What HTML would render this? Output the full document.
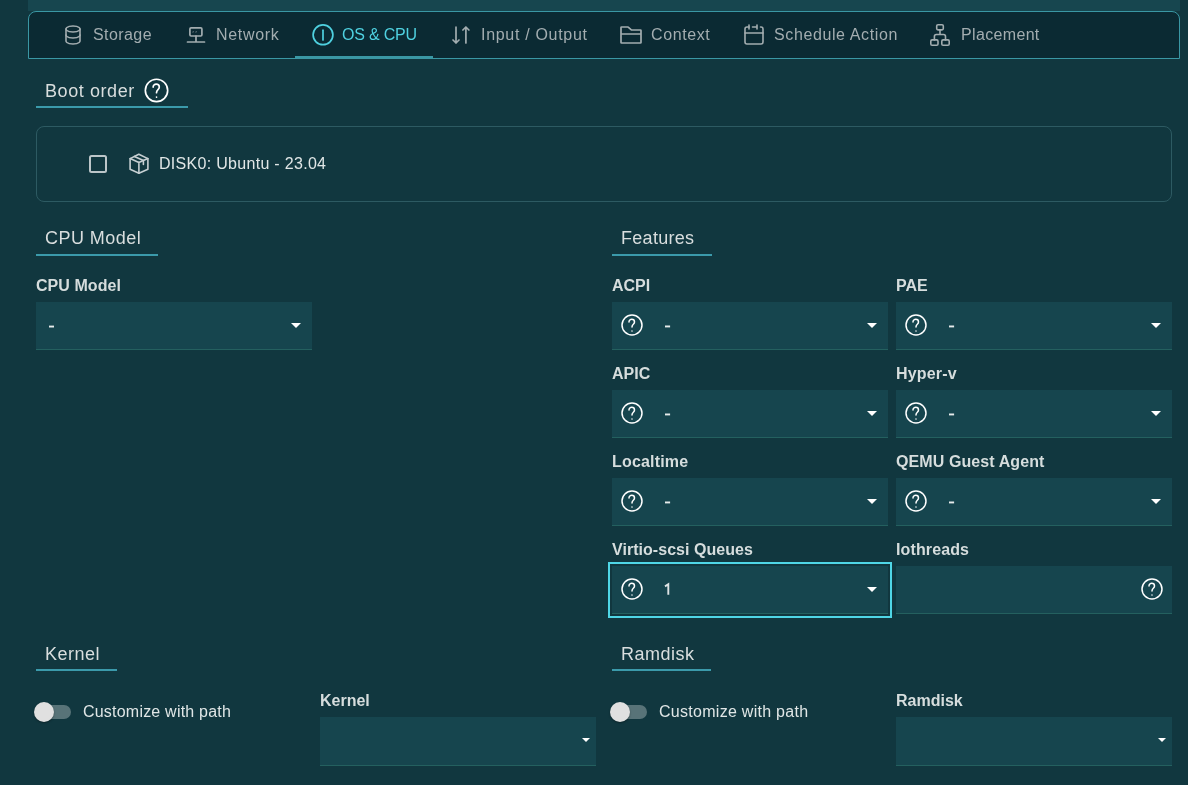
<!DOCTYPE html>
<html><head><meta charset="utf-8">
<style>
*{box-sizing:border-box;margin:0;padding:0}
html,body{width:1188px;height:785px;overflow:hidden;background:#11373f;font-family:"Liberation Sans",sans-serif;color:#e0e6e6}
.abs{position:absolute}
.strip{position:absolute;left:28px;top:0;width:1152px;height:11px;background:#17464f}
.tabs{position:absolute;left:28px;top:11px;width:1152px;height:48px;background:#0b2a33;border:1px solid #3a97a4;border-radius:8px 8px 0 0}
.t{position:absolute;white-space:nowrap;line-height:20px;height:20px;will-change:transform}
.tab{color:#a3adb0;font-size:16px}
.tab.active{color:#4fd1e0}
.uline{position:absolute;left:295px;top:56px;width:138px;height:3px;background:#3a97a4}
.h{font-size:18px;color:#d9dede}
.hl{position:absolute;height:2px;background:#3b9aab}
.box{position:absolute;left:36px;top:126px;width:1136px;height:76px;border:1px solid #2d5a62;border-radius:8px}
.lbl{font-size:16px;font-weight:700;color:#d6dddd}
.sel{position:absolute;width:276px;height:48px;background:#16454e;border-bottom:1px solid #24605f}
.v{font-size:16px;color:#e3e8e8}
.arr{position:absolute;width:0;height:0;border-left:5px solid transparent;border-right:5px solid transparent;border-top:5px solid #fff;left:255px;top:21px}
.arr.s{border-width:4px 4px 0 4px;left:262px;top:21px}
.txt{font-size:16px;color:#e0e6e6}
.track{position:absolute;width:34px;height:14px;border-radius:7px;background:#587378}
.knob{position:absolute;width:20px;height:20px;border-radius:50%;background:#e0e0e0;box-shadow:0 1px 2px rgba(0,0,0,.35)}
svg{position:absolute;left:0;top:0}
</style></head><body>
<div class="strip"></div>
<div class="tabs"></div>
<div class="uline"></div>

<div id="tStorage" class="t tab" style="letter-spacing:0.42px;left:93px;top:25px">Storage</div>
<div id="tNetwork" class="t tab" style="letter-spacing:0.67px;left:216px;top:25px">Network</div>
<div id="tOS" class="t tab active" style="letter-spacing:-0.20px;left:342px;top:25px">OS &amp; CPU</div>
<div id="tIO" class="t tab" style="letter-spacing:0.69px;left:481px;top:25px">Input / Output</div>
<div id="tContext" class="t tab" style="letter-spacing:0.60px;left:651px;top:25px">Context</div>
<div id="tSched" class="t tab" style="letter-spacing:0.61px;left:774px;top:25px">Schedule Action</div>
<div id="tPlace" class="t tab" style="letter-spacing:0.34px;left:961px;top:25px">Placement</div>

<div id="hBoot" class="t h" style="letter-spacing:0.58px;left:45px;top:81px">Boot order</div>
<div class="hl" style="left:36px;top:106px;width:152px"></div>
<div class="box"></div>
<div id="xDisk" class="t txt" style="letter-spacing:0.30px;left:159px;top:154px">DISK0: Ubuntu - 23.04</div>

<div id="hCpu" class="t h" style="letter-spacing:0.45px;left:45px;top:228px">CPU Model</div>
<div class="hl" style="left:36px;top:254px;width:122px"></div>
<div id="hFeat" class="t h" style="letter-spacing:0.29px;left:621px;top:228px">Features</div>
<div class="hl" style="left:612px;top:254px;width:100px"></div>

<div id="lCpu" class="t lbl" style="letter-spacing:0.06px;left:36px;top:276px">CPU Model</div>
<div class="sel" style="left:36px;top:302px"><div class="arr"></div></div>

<div id="lAcpi" class="t lbl" style="left:612px;top:276px">ACPI</div>
<div class="sel" style="left:612px;top:302px"><div class="arr"></div></div>
<div id="lPae" class="t lbl" style="left:896px;top:276px">PAE</div>
<div class="sel" style="left:896px;top:302px"><div class="arr"></div></div>

<div id="lApic" class="t lbl" style="left:612px;top:364px">APIC</div>
<div class="sel" style="left:612px;top:390px"><div class="arr"></div></div>
<div id="lHyper" class="t lbl" style="letter-spacing:0.18px;left:896px;top:364px">Hyper-v</div>
<div class="sel" style="left:896px;top:390px"><div class="arr"></div></div>

<div id="lLocal" class="t lbl" style="letter-spacing:0.17px;left:612px;top:452px">Localtime</div>
<div class="sel" style="left:612px;top:478px"><div class="arr"></div></div>
<div id="lQemu" class="t lbl" style="letter-spacing:0.09px;left:896px;top:452px">QEMU Guest Agent</div>
<div class="sel" style="left:896px;top:478px"><div class="arr"></div></div>

<div id="lVirtio" class="t lbl" style="letter-spacing:0.04px;left:612px;top:540px">Virtio-scsi Queues</div>
<div class="sel" style="left:612px;top:566px"><div class="arr"></div></div>
<div class="abs" style="left:608px;top:562px;width:284px;height:56px;border:2px solid #4fd6e6"></div>
<div id="lIo" class="t lbl" style="letter-spacing:0.12px;left:896px;top:540px">Iothreads</div>
<div class="sel" style="left:896px;top:566px"></div>

<div id="hKernel" class="t h" style="letter-spacing:0.48px;left:45px;top:644px">Kernel</div>
<div class="hl" style="left:36px;top:669px;width:81px"></div>
<div id="hRam" class="t h" style="letter-spacing:0.50px;left:621px;top:644px">Ramdisk</div>
<div class="hl" style="left:612px;top:669px;width:99px"></div>

<div class="track" style="left:37px;top:705px"></div><div class="knob" style="left:34px;top:702px"></div>
<div id="xCust1" class="t txt" style="letter-spacing:0.21px;left:83px;top:702px">Customize with path</div>
<div id="lKernel" class="t lbl" style="left:320px;top:691px">Kernel</div>
<div class="sel" style="left:320px;top:717px;height:49px"><div class="arr s"></div></div>
<div class="track" style="left:613px;top:705px"></div><div class="knob" style="left:610px;top:702px"></div>
<div id="xCust2" class="t txt" style="letter-spacing:0.28px;left:659px;top:702px">Customize with path</div>
<div id="lRam" class="t lbl" style="left:896px;top:691px">Ramdisk</div>
<div class="sel" style="left:896px;top:717px;height:49px"><div class="arr s"></div></div>

<svg width="1188" height="785" viewBox="0 0 1188 785" fill="none" stroke-linecap="round" stroke-linejoin="round">
 <!-- Storage db -->
 <g transform="translate(61,23)" stroke="#a3adb0" stroke-width="1.6">
  <path d="M5 12V18C5 18 5 21 12 21C19 21 19 18 19 18V12"/>
  <path d="M5 6V12C5 12 5 15 12 15C19 15 19 12 19 12V6"/>
  <path d="M12 3C19 3 19 6 19 6C19 6 19 9 12 9C5 9 5 6 5 6C5 6 5 3 12 3Z"/>
 </g>
 <!-- Network -->
 <g stroke="#a3adb0" stroke-width="1.7">
  <rect x="189.9" y="27.8" width="12" height="8.2" rx="1.2"/>
  <path d="M196 36V42M187.5 42H204.5"/>
  <path d="M192.9 32.1L193.3 31.7M195.9 32.1L196.3 31.7" stroke-width="1.1" opacity=".6"/>
 </g>
 <!-- OS info -->
 <g stroke="#4fd1e0" stroke-width="1.7">
  <circle cx="323" cy="34.8" r="9.9"/>
  <path d="M323 30.2V40"/>
 </g>
 <!-- IO arrows -->
 <g stroke="#a3adb0" stroke-width="1.7">
  <path d="M456 27.2V43M453 40L456 43L459 40"/>
  <path d="M465.9 43V27M462.9 30L465.9 27L468.9 30"/>
 </g>
 <!-- Folder -->
 <g transform="translate(619,23)" stroke="#a3adb0" stroke-width="1.7">
  <path d="M2 11V4.6C2 4.26863 2.26863 4 2.6 4H8.77805C8.92127 4 9.05977 4.05124 9.16852 4.14445L12.3315 6.85555C12.4402 6.94876 12.5787 7 12.722 7H21.4C21.7314 7 22 7.26863 22 7.6V11M2 11V19.4C2 19.7314 2.26863 20 2.6 20H21.4C21.7314 20 22 19.7314 22 19.4V11M2 11H22"/>
 </g>
 <!-- Calendar -->
 <g transform="translate(742,23)" stroke="#a3adb0" stroke-width="1.6">
  <path d="M15 4V2M15 4V6M15 4H10.5M3 10V19C3 20.1046 3.89543 21 5 21H19C20.1046 21 21 20.1046 21 19V10H3Z"/>
  <path d="M3 10V6C3 4.89543 3.89543 4 5 4H7"/>
  <path d="M7 2V6"/>
  <path d="M21 10V6C21 4.89543 20.1046 4 19 4H18.5"/>
 </g>
 <!-- Placement -->
 <g stroke="#a3adb0" stroke-width="1.6">
  <rect x="936.7" y="24.8" width="6.6" height="5.1" rx="1.3"/>
  <rect x="930.8" y="39.9" width="7.2" height="5.3" rx="1.3"/>
  <rect x="941.8" y="39.9" width="7.4" height="5.3" rx="1.3"/>
  <path d="M940 30V34.5M934.4 39.9V36.5Q934.4 34.5 936.4 34.5H943.5Q945.5 34.5 945.5 36.5V39.9"/>
 </g>
 <!-- Boot help -->
 <g transform="translate(143.1,77)" stroke="#ffffff" stroke-width="1.5">
  <g transform="scale(1.117)">
   <path d="M12 22C17.5228 22 22 17.5228 22 12C22 6.47715 17.5228 2 12 2C6.47715 2 2 6.47715 2 12C2 17.5228 6.47715 22 12 22Z"/>
   <path d="M9 9C9 5.49997 14.5 5.5 14.5 9C14.5 11.5 12 10.9999 12 13.9999"/>
   <path d="M12 18.01L12.01 17.9989"/>
  </g>
 </g>
 <!-- Checkbox -->
 <rect x="90" y="156" width="16" height="16" rx="1.5" stroke="#bcc6c9" stroke-width="2"/>
 <!-- Package -->
 <g stroke="#c6cfd2" stroke-width="1.6">
  <path d="M138.8 154.3L147.9 158.6V169.2L138.9 173.2L130.1 169.2V158.6Z"/>
  <path d="M130.1 158.6L138.9 162.4L147.9 158.6M138.9 162.4V173.2"/>
  <path d="M134.4 156.45L143.4 160.5V164.5"/>
 </g>
 <path d="M665 586.4L668.3 584.2V594.8" stroke="#dde3e4" stroke-width="1.9" stroke-linecap="butt" stroke-linejoin="miter"/>
 <g fill="#e6ebeb"><rect x="49" y="325.6" width="5" height="1.9"/><rect x="665" y="325.5" width="5.1" height="1.9"/><rect x="665" y="413.5" width="5.1" height="1.9"/><rect x="665" y="501.5" width="5.1" height="1.9"/><rect x="949" y="325.5" width="5.1" height="1.9"/><rect x="949" y="413.5" width="5.1" height="1.9"/><rect x="949" y="501.5" width="5.1" height="1.9"/></g>
 <!-- help icons in selects -->
 <g stroke="#ffffff" stroke-width="1.5" id="helps">
  <g transform="translate(620,313)"><path d="M12 22C17.5228 22 22 17.5228 22 12C22 6.47715 17.5228 2 12 2C6.47715 2 2 6.47715 2 12C2 17.5228 6.47715 22 12 22Z"/><path d="M9 9C9 5.49997 14.5 5.5 14.5 9C14.5 11.5 12 10.9999 12 13.9999"/><path d="M12 18.01L12.01 17.9989"/></g>
  <g transform="translate(904,313)"><path d="M12 22C17.5228 22 22 17.5228 22 12C22 6.47715 17.5228 2 12 2C6.47715 2 2 6.47715 2 12C2 17.5228 6.47715 22 12 22Z"/><path d="M9 9C9 5.49997 14.5 5.5 14.5 9C14.5 11.5 12 10.9999 12 13.9999"/><path d="M12 18.01L12.01 17.9989"/></g>
  <g transform="translate(620,401)"><path d="M12 22C17.5228 22 22 17.5228 22 12C22 6.47715 17.5228 2 12 2C6.47715 2 2 6.47715 2 12C2 17.5228 6.47715 22 12 22Z"/><path d="M9 9C9 5.49997 14.5 5.5 14.5 9C14.5 11.5 12 10.9999 12 13.9999"/><path d="M12 18.01L12.01 17.9989"/></g>
  <g transform="translate(904,401)"><path d="M12 22C17.5228 22 22 17.5228 22 12C22 6.47715 17.5228 2 12 2C6.47715 2 2 6.47715 2 12C2 17.5228 6.47715 22 12 22Z"/><path d="M9 9C9 5.49997 14.5 5.5 14.5 9C14.5 11.5 12 10.9999 12 13.9999"/><path d="M12 18.01L12.01 17.9989"/></g>
  <g transform="translate(620,489)"><path d="M12 22C17.5228 22 22 17.5228 22 12C22 6.47715 17.5228 2 12 2C6.47715 2 2 6.47715 2 12C2 17.5228 6.47715 22 12 22Z"/><path d="M9 9C9 5.49997 14.5 5.5 14.5 9C14.5 11.5 12 10.9999 12 13.9999"/><path d="M12 18.01L12.01 17.9989"/></g>
  <g transform="translate(904,489)"><path d="M12 22C17.5228 22 22 17.5228 22 12C22 6.47715 17.5228 2 12 2C6.47715 2 2 6.47715 2 12C2 17.5228 6.47715 22 12 22Z"/><path d="M9 9C9 5.49997 14.5 5.5 14.5 9C14.5 11.5 12 10.9999 12 13.9999"/><path d="M12 18.01L12.01 17.9989"/></g>
  <g transform="translate(620,577)"><path d="M12 22C17.5228 22 22 17.5228 22 12C22 6.47715 17.5228 2 12 2C6.47715 2 2 6.47715 2 12C2 17.5228 6.47715 22 12 22Z"/><path d="M9 9C9 5.49997 14.5 5.5 14.5 9C14.5 11.5 12 10.9999 12 13.9999"/><path d="M12 18.01L12.01 17.9989"/></g>
  <g transform="translate(1140,577)"><path d="M12 22C17.5228 22 22 17.5228 22 12C22 6.47715 17.5228 2 12 2C6.47715 2 2 6.47715 2 12C2 17.5228 6.47715 22 12 22Z"/><path d="M9 9C9 5.49997 14.5 5.5 14.5 9C14.5 11.5 12 10.9999 12 13.9999"/><path d="M12 18.01L12.01 17.9989"/></g>
 </g>
</svg>
</body></html>
